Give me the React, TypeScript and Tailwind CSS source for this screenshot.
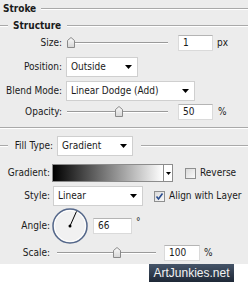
const Line = ({ className = "" }: { className?: string }) => (
  <div className={`h-[2px] border-t border-[#a9a9a9] border-b border-b-white ${className}`} />
);

const Arrow = () => (
  <svg width="7" height="4" viewBox="0 0 7 4">
    <polygon points="0,0 7,0 3.5,4" fill="#000" />
  </svg>
);

const Thumb = () => (
  <svg width="8" height="11" viewBox="0 0 8 11">
    <defs>
      <linearGradient id="tg" x1="0" y1="0" x2="0" y2="1">
        <stop offset="0" stopColor="#fafafa" />
        <stop offset="1" stopColor="#d6d6d6" />
      </linearGradient>
    </defs>
    <path d="M0.5 10.5 V3.5 L4 0.5 L7.5 3.5 V10.5 Z" fill="url(#tg)" stroke="#8a8a8a" />
  </svg>
);

function Slider({ width, at }: { width: string; at: number }) {
  return (
    <div className={`relative flex h-[12px] items-center ${width}`}>
      <div className="h-[2px] w-full border-t border-[#9a9a9a] border-b border-b-white" />
      <div className="absolute top-0" style={{ left: at }}>
        <Thumb />
      </div>
    </div>
  );
}

function Select({ width, text }: { width: string; text: string }) {
  return (
    <div
      className={`flex h-[20px] items-center justify-between border border-[#cfcfcf] bg-white pl-[4px] pr-[5px] ${width}`}
    >
      <span>{text}</span>
      <Arrow />
    </div>
  );
}

function Field({ width, value }: { width: string; value: string }) {
  return (
    <div
      className={`flex h-[16px] items-center border border-[#dadada] border-t-[#b4b4b4] bg-white pl-[4px] ${width}`}
    >
      {value}
    </div>
  );
}

function Check({ checked }: { checked?: boolean }) {
  return (
    <svg width="11" height="11" viewBox="0 0 11 11">
      <defs>
        <linearGradient id="cg" x1="0" y1="0" x2="1" y2="1">
          <stop offset="0" stopColor="#d8d8d8" />
          <stop offset="1" stopColor="#fbfbfb" />
        </linearGradient>
      </defs>
      <rect x="0.5" y="0.5" width="10" height="10" fill="url(#cg)" stroke="#8e8f8f" />
      {checked && (
        <path d="M2.5 5.5 L4.5 8 L8.5 2.5" fill="none" stroke="#2a4d8f" strokeWidth="1.6" />
      )}
    </svg>
  );
}

export default function App() {
  const a = (66 * Math.PI) / 180;
  return (
    <div className="min-h-[295px] w-[248px] bg-white font-['DejaVu_Sans_Condensed','Liberation_Sans',sans-serif] text-[10px] leading-none text-[#1a1a1a]">
      <div className="h-[264px] bg-[#ececec]">
        {/* Stroke heading */}
        <div className="flex h-[18px] items-center pl-[3px]">
          <span className="font-bold">Stroke</span>
          <Line className="ml-[5px] flex-1" />
        </div>
        <div className="flex h-[16px] items-center">
          <Line className="w-[8px]" />
          <span className="ml-[5px] font-bold">Structure</span>
          <Line className="ml-[6px] flex-1" />
        </div>

        {/* Size */}
        <div className="flex h-[18px] items-center">
          <span className="w-[62px] text-right">Size:</span>
          <Slider width="ml-[5px] w-[101px]" at={0} />
          <Field width="ml-[10px] w-[35px]" value="1" />
          <span className="ml-[4px]">px</span>
        </div>

        <div className="mt-[3px] flex h-[24px] items-center">
          <span className="w-[62px] text-right">Position:</span>
          <Select width="ml-[4px] w-[72px]" text="Outside" />
        </div>

        <div className="flex h-[24px] items-center">
          <span className="w-[62px] text-right">Blend Mode:</span>
          <Select width="ml-[4px] w-[129px]" text="Linear Dodge (Add)" />
        </div>

        <div className="flex h-[18px] items-center">
          <span className="w-[62px] text-right">Opacity:</span>
          <Slider width="ml-[5px] w-[101px]" at={48} />
          <Field width="ml-[10px] w-[35px]" value="50" />
          <span className="ml-[5px]">%</span>
        </div>

        <Line className="mt-[6px]" />

        {/* Fill type */}
        <div className="mt-[5px] flex h-[24px] items-center">
          <Line className="w-[8px]" />
          <span className="w-[45px] text-right">Fill Type:</span>
          <Select width="ml-[4px] w-[76px]" text="Gradient" />
          <Line className="ml-[8px] flex-1" />
        </div>

        <div className="mt-[3px] flex h-[24px] items-center">
          <span className="w-[50px] text-right">Gradient:</span>
          <div className="ml-[2px] flex h-[18px] w-[121px] border border-[#8c8c8c]">
            <div className="flex-1 bg-[linear-gradient(to_right,#000,#fff)]" />
            <div className="flex w-[9px] items-center justify-center border-l border-[#8c8c8c] bg-white">
              <svg width="5" height="3" viewBox="0 0 5 3">
                <polygon points="0,0 5,0 2.5,3" fill="#000" />
              </svg>
            </div>
          </div>
          <div className="ml-[12px] flex">
            <Check />
          </div>
          <span className="ml-[4px]">Reverse</span>
        </div>

        <div className="flex h-[22px] items-center">
          <span className="w-[50px] text-right">Style:</span>
          <Select width="ml-[3px] w-[90px]" text="Linear" />
          <div className="ml-[11px] flex">
            <Check checked />
          </div>
          <span className="ml-[4px]">Align with Layer</span>
        </div>

        <div className="flex h-[38px] items-center">
          <span className="w-[50px] text-right">Angle:</span>
          <svg className="ml-[1px]" width="38" height="38" viewBox="0 0 38 38">
            <circle cx="19" cy="19" r="17" fill="#f1f1f1" stroke="#54678a" strokeWidth="1.5" />
            <circle cx="19" cy="19" r="15.5" fill="none" stroke="#ffffff" strokeWidth="1" />
            <line
              x1="19"
              y1="19"
              x2={19 + 16 * Math.cos(a)}
              y2={19 - 16 * Math.sin(a)}
              stroke="#000"
              strokeWidth="1"
            />
            <circle cx="19" cy="19" r="1.5" fill="#000" />
          </svg>
          <Field width="ml-[4px] w-[39px]" value="66" />
          <span className="ml-[4px] -mt-[8px]">°</span>
        </div>

        <div className="flex h-[16px] items-center">
          <span className="w-[50px] text-right">Scale:</span>
          <Slider width="ml-[7px] w-[99px]" at={56} />
          <Field width="ml-[8px] w-[36px]" value="100" />
          <span className="ml-[4px]">%</span>
        </div>
      </div>

      <div className="ml-[149px] flex h-[18px] w-[85px] items-center justify-center bg-[linear-gradient(to_bottom,#465569,#1e2836)] font-['Liberation_Sans',sans-serif] text-[12px] text-[#f2f2f2]">
        ArtJunkies.net
      </div>
    </div>
  );
}
